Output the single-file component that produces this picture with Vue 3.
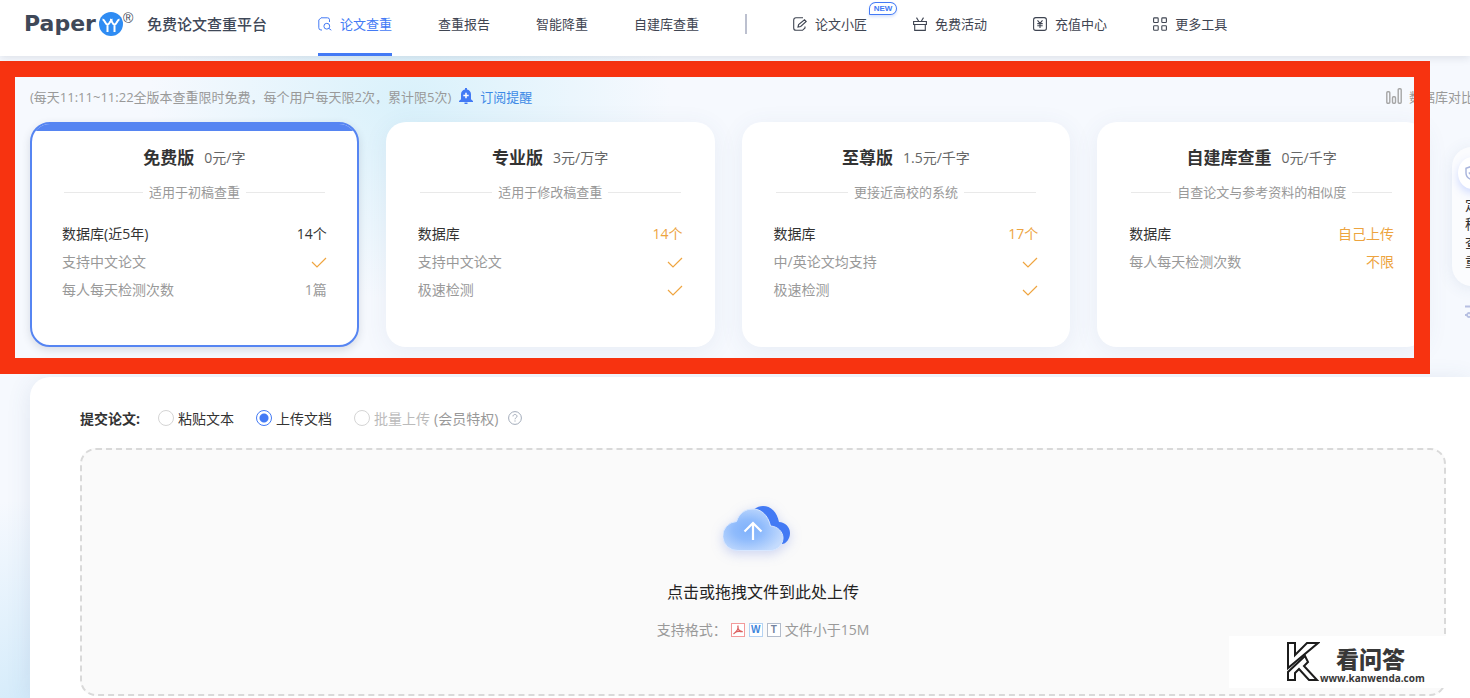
<script setup>
import { ref } from 'vue'

const mode = ref('file')
const mainNav = ['查重报告', '智能降重', '自建库查重']
const toolNav = [
  { label: '论文小匠', icon: 'edit', badge: 'NEW' },
  { label: '免费活动', icon: 'gift' },
  { label: '充值中心', icon: 'pay' },
  { label: '更多工具', icon: 'grid' }
]
const plans = [
  {
    name: '免费版', price: '0元/字', desc: '适用于初稿查重', active: true,
    rows: [
      { label: '数据库(近5年)', value: '14个' },
      { label: '支持中文论文', check: true },
      { label: '每人每天检测次数', value: '1篇' }
    ]
  },
  {
    name: '专业版', price: '3元/万字', desc: '适用于修改稿查重',
    rows: [
      { label: '数据库', value: '14个' },
      { label: '支持中文论文', check: true },
      { label: '极速检测', check: true }
    ]
  },
  {
    name: '至尊版', price: '1.5元/千字', desc: '更接近高校的系统',
    rows: [
      { label: '数据库', value: '17个' },
      { label: '中/英论文均支持', check: true },
      { label: '极速检测', check: true }
    ]
  },
  {
    name: '自建库查重', price: '0元/千字', desc: '自查论文与参考资料的相似度',
    rows: [
      { label: '数据库', value: '自己上传' },
      { label: '每人每天检测次数', value: '不限' }
    ]
  }
]
</script>

<template>
  <div class="page">
    <header class="header">
      <a class="brand" href="#">
        <span class="brand-name">Paper</span>
        <svg class="brand-mark" width="24" height="24" viewBox="0 0 24 24" fill="none">
          <circle cx="12" cy="12" r="12" fill="#2f8cf3" />
          <path d="M3.500 7.500c2.500 0 2.500 5 5 5s2.500-4.500 5-5M8.500 12.500V20M11 7.500c2 0 2 5 4.500 5s2.500-5 5-5M15.500 12.500V20" stroke="#fff" stroke-width="2" />
        </svg>
        <span class="reg">®</span>
        <span class="slogan">免费论文查重平台</span>
      </a>
      <nav class="nav">
        <a class="nav-item current" href="#">
          <svg width="14" height="14" viewBox="0 0 14 14" fill="none" stroke="currentColor">
            <path d="M4 13H3A2.200 2.200 0 0 1 .8 10.800V3L3 .8h6.500a2 2 0 0 1 2 2V5" />
            <circle cx="8.800" cy="9.200" r="2.900" /><path d="M11 11.500l2.300 1.700" />
          </svg>
          <span>论文查重</span>
        </a>
        <a v-for="n in mainNav" :key="n" class="nav-item" href="#">{{ n }}</a>
        <i class="nav-split"></i>
        <a v-for="t in toolNav" :key="t.label" class="nav-item" href="#">
          <svg width="14" height="14" viewBox="0 0 14 14" fill="none" stroke="currentColor" stroke-width="1.100">
            <template v-if="t.icon === 'edit'">
              <path d="M10 .8H3A2.300 2.300 0 0 0 .7 3v8A2.300 2.300 0 0 0 3 13.300h6.500L12 11V9.500" />
              <path d="M5 10l.6-2.500L11.500 2.800l1.700 1.700-5.500 5z" />
            </template>
            <template v-else-if="t.icon === 'gift'">
              <path d="M.6 4.500h12.800v3H.6zM1.700 7.500v5.900h10.600V7.500M3.500.6l2.200 3.600M10.500.6L8.300 4.200" />
            </template>
            <template v-else-if="t.icon === 'pay'">
              <rect x=".6" y=".6" width="12.800" height="12.800" rx="2.200" />
              <path d="M4.500 3.300L7 6.300l2.500-3M4.300 6.600h5.400M4.300 8.800h5.400M7 6.300V11" />
            </template>
            <template v-else>
              <rect x=".6" y=".9" width="4.600" height="4.600" rx=".8" />
              <rect x="8.800" y=".9" width="4.600" height="4.600" rx=".8" />
              <rect x=".6" y="8.700" width="4.600" height="4.600" rx=".8" />
              <rect x="8.800" y="8.700" width="4.600" height="4.600" rx=".8" />
            </template>
          </svg>
          <span>{{ t.label }}</span>
          <em v-if="t.badge" class="badge">{{ t.badge }}</em>
        </a>
      </nav>
    </header>

    <section class="plans-area">
      <div class="toolbar">
        <span>(每天11:11~11:22全版本查重限时免费，每个用户每天限2次，累计限5次)</span>
        <a class="remind" href="#">
          <svg width="14" height="16" viewBox="0 0 14 16">
            <path d="M6 0h2v1.500c2.500.5 4 2.300 4 4.700v5L14 13v1H0v-1l2-1.800v-5c0-2.400 1.500-4.200 4-4.700z" fill="#437af5" />
            <path d="M5.500 14.500h3V16h-3z" fill="#437af5" />
            <path d="M7 4.800v5.400M4.300 7.500h5.400" stroke="#fff" stroke-width="1.500" />
          </svg>
          订阅提醒
        </a>
        <a class="compare" href="#">
          <svg width="16" height="16" viewBox="0 0 16 16" fill="none" stroke="#a6a6a6" stroke-width="1.400">
            <rect x=".8" y="3.800" width="3" height="11.400" rx="1" />
            <rect x="6.500" y="8.800" width="3" height="6.400" rx="1" />
            <rect x="12.200" y=".8" width="3" height="14.400" rx="1" />
          </svg>
          数据库对比
        </a>
      </div>

      <div class="cards">
        <article v-for="p in plans" :key="p.name" class="card" :class="{ active: p.active }">
          <h2 class="card-title">{{ p.name }}<span class="price">{{ p.price }}</span></h2>
          <p class="desc">{{ p.desc }}</p>
          <ul class="rows">
            <li v-for="r in p.rows" :key="r.label">
              <span>{{ r.label }}</span>
              <svg v-if="r.check" class="check" width="16" height="12" viewBox="0 0 16 12" fill="none">
                <path d="M1 6L6 11L15 2" stroke="#efa540" stroke-width="1.200" />
              </svg>
              <span v-else class="value">{{ r.value }}</span>
            </li>
          </ul>
        </article>
      </div>
      <div class="frame"></div>
    </section>

    <main class="submit">
      <div class="modes">
        <strong>提交论文:</strong>
        <div class="choices">
          <label><input v-model="mode" type="radio" name="mode" value="text" />粘贴文本</label>
          <label><input v-model="mode" type="radio" name="mode" value="file" />上传文档</label>
          <label class="locked"><input type="radio" name="mode" value="batch" disabled />批量上传 <span>(会员特权)</span></label>
        </div>
        <svg class="help" width="14" height="14" viewBox="0 0 14 14" fill="none" stroke="#a3acba">
          <circle cx="7" cy="7" r="6.400" />
          <path d="M5 5.400C5 4 6 3.500 7 3.500s2 .7 2 1.800C9 6.700 7 6.700 7 8.300M7 9.400v1.200" />
        </svg>
      </div>

      <button class="drop" type="button">
        <svg class="cloud" width="80" height="56" viewBox="0 0 80 56" fill="none">
          <defs>
            <radialGradient id="front" cx=".42" cy=".5" r=".6">
              <stop offset="0" stop-color="#7fb1fb" />
              <stop offset=".4" stop-color="#8fbbfc" />
              <stop offset="1" stop-color="#c4dbfd" />
            </radialGradient>
          </defs>
          <path d="M25 14C28 6 34 2 40 2c8 0 14 6 16 16 6 0 11 5 11 11s-4 11-8 11H38z" fill="#437af4" />
          <path d="M15 46.500A14.500 14.500 0 0 1 13.500 17.500C16 9.500 22 5 30 5s15 6 17.500 17C55 22.500 60 28 60 34s-5 12.500-13 12.500z" fill="url(#front)" stroke="#d7e7ff" />
          <path d="M30 36V20M21.500 27.500L30 19l8.500 8.500" stroke="#fff" stroke-width="2.200" />
        </svg>
        <span class="drop-title">点击或拖拽文件到此处上传</span>
        <span class="formats">
          支持格式：
          <span class="types">
            <svg width="14" height="14" viewBox="0 0 14 14" fill="none">
              <rect x=".5" y=".5" width="13" height="13" fill="#fff" stroke="#f39a9a" />
              <path d="M6.800 2.500c.8 2.500-.8 6-4.300 8.500M7 5.500c.8 2.300 2 3.400 4.800 3.200M3.500 9.900c2-1.500 4.200-1.600 6-1.400" stroke="#dc6060" stroke-width="1.300" />
            </svg>
            <b class="type word">W</b>
            <b class="type txt">T</b>
          </span>
          文件小于15M
        </span>
      </button>
    </main>

    <aside class="side">
      <a class="side-card" href="#">
        <span class="side-icon">
          <svg width="16" height="16" viewBox="0 0 20 20" fill="none" stroke="#a8b4dc" stroke-width="1.800">
            <path d="M10 1.500L17.500 4v6c0 4-3 7-7.500 8.500C5.500 17 2.500 14 2.500 10V4zM6 9.500l3 3 5-5" />
          </svg>
        </span>
        <span class="side-text">定稿查重</span>
      </a>
      <svg class="side-more" width="14" height="14" viewBox="0 0 14 14" fill="none" stroke="#b7c0e2" stroke-width="1.800">
        <path d="M0 1.500h14M0 10h2M6 10h8" /><circle cx="4" cy="10" r="2" />
      </svg>
    </aside>

    <div class="mark">
      <svg width="34" height="42" viewBox="0 0 34 42" fill="none" stroke="#1c1c1c" stroke-width="2">
        <path d="M2 2h7v12L21 2h11L2 27z" />
        <path d="M2 38V31L19 15l3 6-4 4 13 14h-8L13 28l-4 4v7H2z" />
      </svg>
      <div class="mark-text">
        <b>看问答</b>
        <span>www.kanwenda.com</span>
      </div>
    </div>
  </div>
</template>

<style>
body {
  margin: 0;
}
</style>

<style scoped>
.page {
  position: relative;
  display: flex;
  flex-direction: column;
  min-height: 100vh;
  overflow: hidden;
  font-family: "Open Sans", "Noto Sans CJK SC", sans-serif;
  font-size: 14px;
  color: #333;
  background:
    radial-gradient(ellipse 260px 200px at 410px 100px, #d9f1fb 0%, rgba(217, 241, 251, 0) 100%),
    radial-gradient(ellipse 140px 240px at 20px 740px, #cfe9fa 0%, rgba(207, 233, 250, 0) 100%),
    #f6f9fe;
}
a {
  color: inherit;
  text-decoration: none;
}
.header {
  position: relative;
  z-index: 2;
  display: flex;
  height: 56px;
  padding-left: 24px;
  background: #fff;
  box-shadow: 0 2px 8px rgba(40, 50, 70, 0.12);
  white-space: nowrap;
}
.brand {
  display: flex;
  align-items: center;
  height: 47px;
  color: #3f4858;
}
.brand-name {
  width: 75px;
  font: bold 22px/28px "DejaVu Sans", sans-serif;
}
.reg {
  width: 24px;
  padding-bottom: 12px;
  font: 14px/16px "Liberation Sans", sans-serif;
}
.slogan {
  font-size: 15px;
  font-weight: 500;
}
.nav {
  display: flex;
  gap: 46px;
  margin-left: 51px;
}
.nav-item {
  position: relative;
  display: flex;
  align-items: center;
  gap: 8px;
  box-sizing: border-box;
  height: 56px;
  padding-bottom: 9px;
  font-size: 13px;
  color: #3f4552;
}
.current {
  color: #437af5;
  padding-bottom: 6px;
  border-bottom: 3px solid #437af5;
}
.nav-split {
  width: 2px;
  height: 20px;
  margin-top: 14px;
  background: #bcc0cf;
}
.badge {
  position: absolute;
  top: 2px;
  left: 76px;
  box-sizing: border-box;
  width: 28px;
  border: 1px solid #437af5;
  border-radius: 7px 7px 7px 1px;
  background: #fff;
  box-shadow: 0 2px 3px rgba(67, 122, 245, 0.2);
  color: #437af5;
  font: 8px/11px "Liberation Sans", sans-serif;
  font-weight: bold;
  text-align: center;
}
.plans-area {
  position: relative;
}
.toolbar {
  display: flex;
  align-items: center;
  box-sizing: border-box;
  height: 66px;
  padding: 14px 0 0 30px;
  font-size: 13px;
  color: #999;
  white-space: nowrap;
}
.remind,
.compare {
  display: flex;
  align-items: center;
  gap: 7px;
}
.remind {
  margin-left: 8px;
  color: #3d8ae6;
}
.compare {
  margin-left: auto;
  margin-right: -4px;
}
.cards {
  display: grid;
  grid-template-columns: repeat(4, 1fr);
  gap: 27px;
  padding: 0 44px 0 30px;
}
.card {
  position: relative;
  box-sizing: border-box;
  min-height: 225px;
  padding: 22px 32px 0;
  overflow: hidden;
  border-radius: 20px;
  background: #fff;
  box-shadow: 0 4px 24px rgba(60, 90, 140, 0.08);
}
.active {
  padding: 20px 30px 0;
  border: 2px solid #5685f2;
  box-shadow: 0 3px 8px rgba(50, 60, 90, 0.16);
}
.active::before {
  content: "";
  position: absolute;
  inset: 0 0 auto;
  height: 7px;
  background: #5685f2;
}
.card-title {
  display: flex;
  align-items: center;
  justify-content: center;
  gap: 10px;
  margin: 0;
  font-size: 17px;
  line-height: 28px;
}
.price {
  font-size: 14px;
  font-weight: normal;
  color: #666;
}
.desc {
  display: flex;
  align-items: center;
  gap: 6px;
  margin: 10px 2px 18px;
  font-size: 13px;
  line-height: 20px;
  color: #999;
  white-space: nowrap;
}
.desc::before,
.desc::after {
  content: "";
  flex: 1;
  height: 1px;
  background: #e9e9e9;
}
.rows {
  margin: 0;
  padding: 0;
  list-style: none;
  line-height: 28px;
}
.rows li {
  display: flex;
  align-items: center;
  justify-content: space-between;
  color: #999;
}
.rows li:first-child {
  color: #333;
}
.rows .value {
  color: #eda43f;
}
.active .value {
  color: inherit;
}
.frame {
  position: absolute;
  inset: 5px 40px -27px 0;
  border: 16px solid #f73310;
  border-left-width: 15px;
  pointer-events: none;
}
.submit {
  flex: 1;
  margin: 30px 0 0 30px;
  padding: 29px 24px 0 50px;
  border-radius: 20px 0 0 0;
  background: #fff;
  box-shadow: 0 4px 24px rgba(60, 90, 140, 0.12);
}
.modes {
  display: flex;
  align-items: center;
  height: 24px;
}
.choices {
  display: flex;
  gap: 22px;
  margin: 0 10px 0 18px;
}
.choices label {
  display: flex;
  align-items: center;
  gap: 4px;
}
.choices input {
  appearance: none;
  box-sizing: border-box;
  width: 16px;
  height: 16px;
  margin: 0;
  border: 1px solid #d5d5d5;
  border-radius: 50%;
  background: #fff;
}
.choices input:checked {
  border-color: #437af5;
  background: radial-gradient(circle, #437af5 4px, #fff 5px);
}
.choices .locked {
  color: #bbb;
}
.locked span {
  color: #999;
}
.drop {
  display: flex;
  flex-direction: column;
  align-items: center;
  box-sizing: border-box;
  width: 100%;
  height: 248px;
  margin-top: 18px;
  padding: 54px 0 0;
  border: 2px dashed #d9d9d9;
  border-radius: 16px;
  background: #fafafa;
  color: #222;
  font-family: inherit;
}
.cloud {
  filter: drop-shadow(0 3px 6px rgba(67, 100, 220, 0.25));
}
.drop-title {
  margin-top: 20px;
  font-size: 16px;
  line-height: 24px;
}
.formats {
  display: flex;
  align-items: center;
  gap: 4px;
  margin-top: 16px;
  font-size: 14px;
  line-height: 20px;
  color: #999;
}
.types {
  display: flex;
  gap: 4px;
}
.type {
  box-sizing: border-box;
  width: 14px;
  height: 14px;
  border: 1px solid;
  background: #fff;
  font: bold 10px/12px "Liberation Sans", sans-serif;
  text-align: center;
}
.word {
  border-color: #b5d3f3;
  color: #3f86dc;
}
.txt {
  border-color: #b3bccb;
  color: #75849f;
}
.side {
  position: absolute;
  top: 147px;
  right: -22px;
  width: 40px;
}
.side-card {
  display: flex;
  flex-direction: column;
  align-items: center;
  box-sizing: border-box;
  height: 139px;
  padding-top: 10px;
  border-radius: 20px;
  background: #fbfcfe;
  box-shadow: 0 2px 16px rgba(60, 90, 140, 0.1);
}
.side-icon {
  display: flex;
  align-items: center;
  justify-content: center;
  width: 28px;
  height: 32px;
  border-radius: 50%;
  background: #fff;
  box-shadow: 0 4px 8px rgba(80, 120, 255, 0.25);
}
.side-text {
  width: 14px;
  margin-top: 6px;
  font-size: 14px;
  line-height: 19px;
  text-align: center;
  word-break: break-all;
}
.side-more {
  display: block;
  margin: 19px auto 0;
}
.mark {
  position: absolute;
  right: 24px;
  bottom: 10px;
  display: flex;
  align-items: center;
  box-sizing: border-box;
  width: 217px;
  height: 52px;
  padding-left: 57px;
  background: #fff;
  color: #383838;
}
.mark-text {
  display: flex;
  flex-direction: column;
  padding-top: 8px;
}
.mark-text b {
  padding-left: 16px;
  font-size: 23px;
  font-weight: 900;
  line-height: 23px;
}
.mark-text span {
  font: bold 10px/14px "Open Sans", sans-serif;
}
</style>
